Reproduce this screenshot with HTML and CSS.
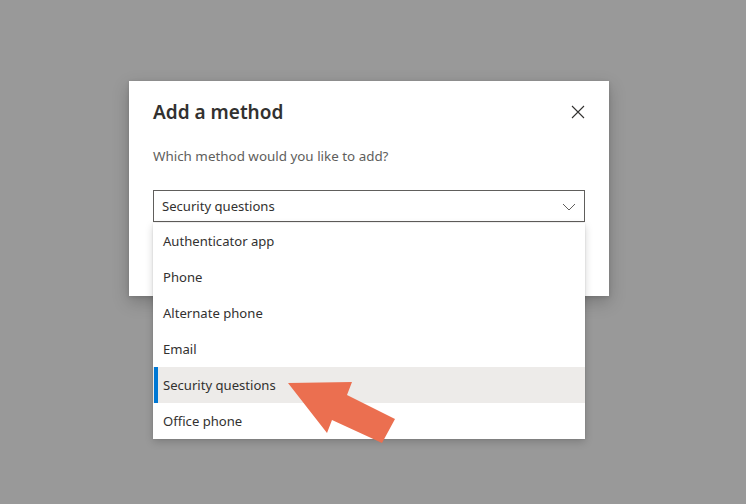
FILE: index.html
```html
<!DOCTYPE html>
<html>
<head>
<meta charset="utf-8">
<link rel="stylesheet" href="styles.css">
</head>
<body>
<div class="dialog">
  <div class="header">
    <h1 class="title">Add a method</h1>
    <button class="close" aria-label="Close">
      <svg width="14" height="14" viewBox="0 0 14 14"><path d="M1 1 L13 13 M13 1 L1 13" stroke="#323130" stroke-width="1.1" fill="none"/></svg>
    </button>
  </div>
  <p class="subtitle">Which method would you like to add?</p>
  <div class="field">
    <div class="select">
      <span>Security questions</span>
      <svg class="chev" width="14" height="8" viewBox="0 0 14 8"><path d="M1 1 L7 7 L13 1" stroke="#605e5c" stroke-width="1" fill="none"/></svg>
    </div>
    <ul class="menu">
      <li>Authenticator app</li>
      <li>Phone</li>
      <li>Alternate phone</li>
      <li>Email</li>
      <li class="selected">Security questions</li>
      <li>Office phone</li>
    </ul>
  </div>
</div>
<svg class="arrow" width="120" height="70" viewBox="280 375 120 70">
  <polygon points="288,383 352,382 347,395 395,419 382,443 332,420 327,433" fill="#eb6f50"/>
</svg>
</body>
</html>
```
FILE: styles.css
```css
* { box-sizing: border-box; }
html, body { margin: 0; padding: 0; }
body {
  width: 746px;
  height: 504px;
  background: #999999;
  font-family: "Noto Sans", "Open Sans", sans-serif;
  color: #323130;
  padding-top: 81px;
  overflow: hidden;
  position: relative;
}
.dialog {
  margin-left: 129px;
  width: 480px;
  height: 215px;
  background: #fff;
  padding: 17px 24px 0;
  box-shadow: 0 6px 16px rgba(0,0,0,0.22), 0 1px 4px rgba(0,0,0,0.12);
}
.header {
  display: flex;
  justify-content: space-between;
  align-items: center;
  height: 28px;
}
.title {
  margin: 0;
  font-size: 19px;
  font-weight: 600;
  line-height: 28px;
  color: #323130;
}
.close {
  border: 0;
  background: none;
  padding: 0;
  width: 14px;
  height: 14px;
  display: flex;
}
.subtitle {
  margin: 20px 0 0;
  font-size: 13.4px;
  line-height: 20px;
  color: #605e5c;
}
.field {
  position: relative;
  margin-top: 24px;
}
.select {
  height: 32px;
  border: 1px solid #605e5c;
  display: flex;
  align-items: center;
  justify-content: space-between;
  padding: 0 8px;
  font-size: 13.1px;
  color: #323130;
}
.chev { margin-top: 1px; }
.menu {
  position: absolute;
  left: 0;
  right: 0;
  top: 33px;
  margin: 0;
  padding: 0;
  list-style: none;
  background: #fff;
  box-shadow: 0 3px 8px rgba(0,0,0,0.18), 0 0 2px rgba(0,0,0,0.1);
}
.menu li {
  height: 36px;
  line-height: 36px;
  padding-left: 10px;
  font-size: 13.1px;
  color: #323130;
  position: relative;
}
.menu li.selected {
  background: #edebe9;
}
.menu li.selected::before {
  content: "";
  position: absolute;
  left: 1px;
  top: 0;
  bottom: 0;
  width: 4px;
  background: #0078d4;
}
.arrow {
  position: absolute;
  left: 280px;
  top: 375px;
}
```
